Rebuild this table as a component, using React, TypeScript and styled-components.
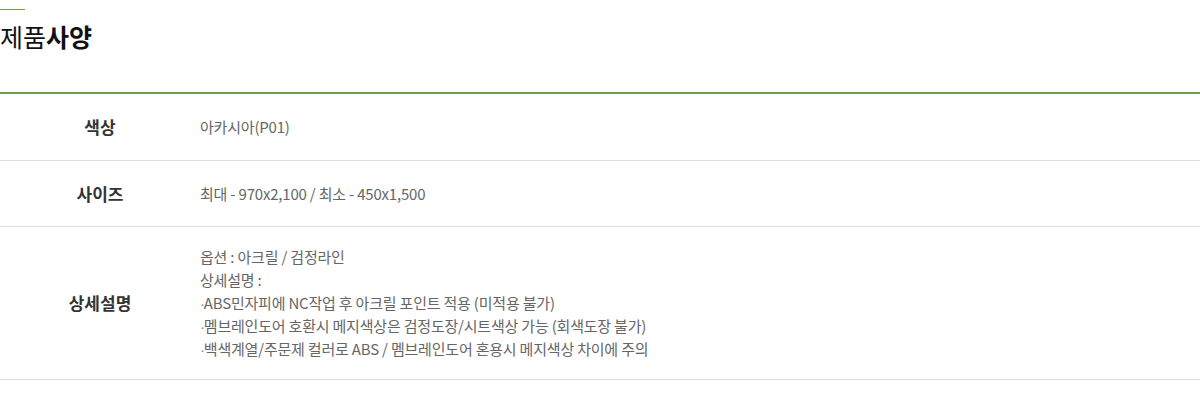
import React from "react";
import styled, { createGlobalStyle } from "styled-components";

const GlobalStyle = createGlobalStyle`
  html, body { margin: 0; padding: 0; background: #fff; }
  body { font-family: "Noto Sans CJK KR", "Noto Sans", sans-serif; }
`;

const Section = styled.section`
  width: 1200px;
  padding-top: 9px;
`;

const TopRule = styled.div`
  width: 25px;
  height: 1px;
  background: #6a9f45;
`;

const Title = styled.h2`
  margin: 0;
  padding: 9px 0 0;
  height: 82px;
  box-sizing: border-box;
  font-size: 25px;
  line-height: 34px;
  font-weight: 400;
  color: #111;
  letter-spacing: 0;
  b { font-weight: 700; }
`;

const Table = styled.div`
  border-top: 2px solid #6a9f45;
`;

const Row = styled.div<{ $pad: string }>`
  display: grid;
  grid-template-columns: 200px 1fr;
  align-items: center;
  border-bottom: 1px solid #dddddd;
  padding: ${(p) => p.$pad};
`;

const Label = styled.div`
  text-align: center;
  font-size: 17px;
  line-height: 23px;
  font-weight: 700;
  color: #333;
  letter-spacing: 0;
`;

const Value = styled.div`
  font-size: 15px;
  line-height: 23px;
  color: #666;
  letter-spacing: -0.2px;
`;

const Line = styled.div`
  height: 23px;
`;

const Bullet = styled.span`
  font-family: "Liberation Sans", sans-serif;
  line-height: 0;
  margin-right: -1px;
  color: #888;
`;

export default function App() {
  return (
    <>
      <GlobalStyle />
      <Section>
        <TopRule />
        <Title>
          제품<b>사양</b>
        </Title>
        <Table>
          <Row $pad="21px 0 22px">
            <Label>색상</Label>
            <Value>아카시아(P01)</Value>
          </Row>
          <Row $pad="21px 0 21px">
            <Label>사이즈</Label>
            <Value>최대 - 970x2,100 / 최소 - 450x1,500</Value>
          </Row>
          <Row $pad="18px 0 19px">
            <Label>상세설명</Label>
            <Value>
              <Line>옵션 : 아크릴 / 검정라인</Line>
              <Line>상세설명 :</Line>
              <Line>
                <Bullet>·</Bullet>ABS민자피에 NC작업 후 아크릴 포인트 적용 (미적용 불가)
              </Line>
              <Line>
                <Bullet>·</Bullet>멤브레인도어 호환시 메지색상은 검정도장/시트색상 가능 (회색도장 불가)
              </Line>
              <Line>
                <Bullet>·</Bullet>백색계열/주문제 컬러로 ABS / 멤브레인도어 혼용시 메지색상 차이에 주의
              </Line>
            </Value>
          </Row>
        </Table>
      </Section>
    </>
  );
}
